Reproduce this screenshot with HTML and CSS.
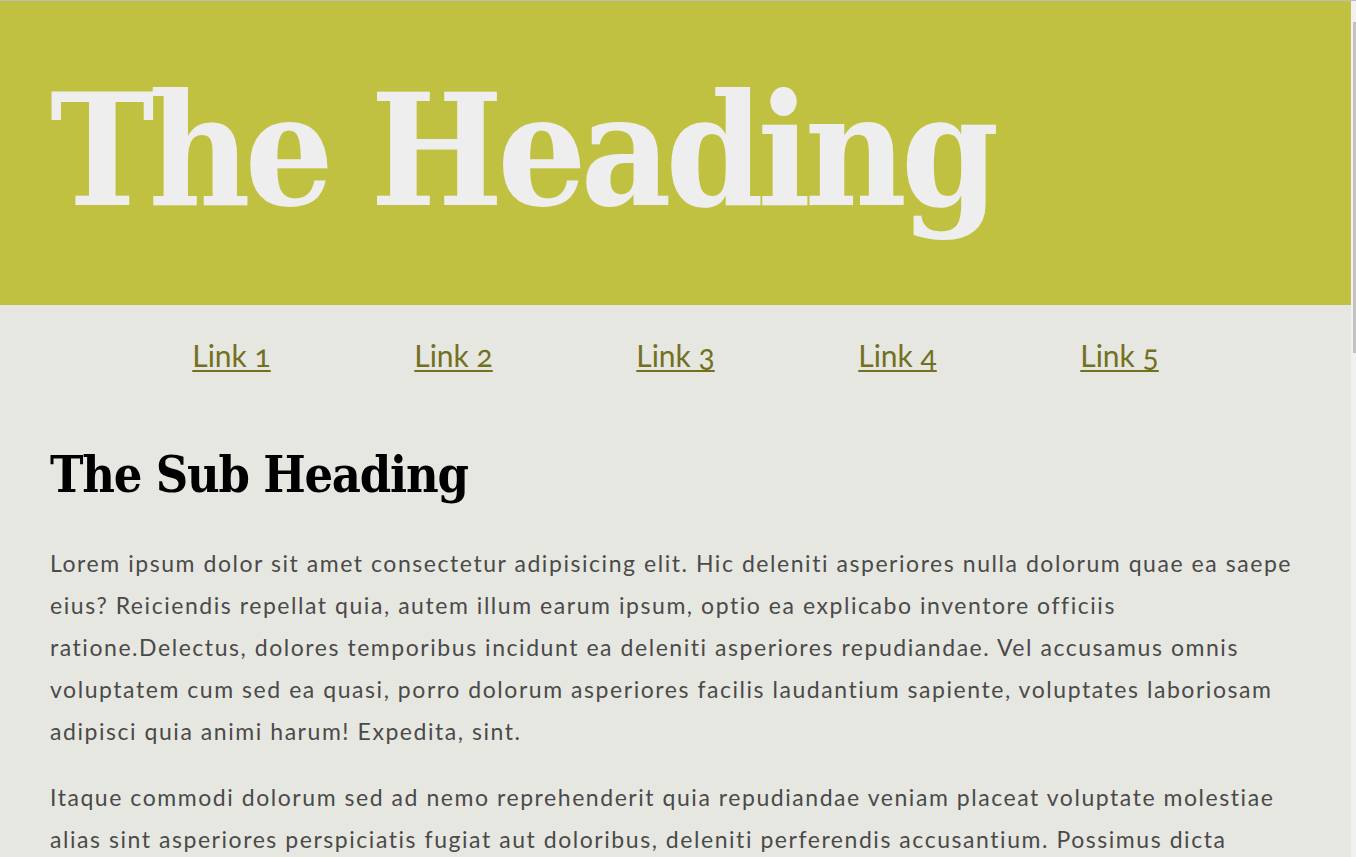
FILE: index.html
```html
<!DOCTYPE html>
<html lang="en">
<head>
<meta charset="utf-8">
<title>The Heading</title>
<link rel="stylesheet" href="styles.css">
</head>
<body>
<div class="page">
  <header class="site-header">
    <h1 class="site-title">The Heading</h1>
  </header>
  <nav class="site-nav">
    <ul class="nav-list">
      <li class="nav-item"><a class="nav-link" href="#">Link 1</a></li>
      <li class="nav-item"><a class="nav-link" href="#">Link 2</a></li>
      <li class="nav-item"><a class="nav-link" href="#">Link 3</a></li>
      <li class="nav-item"><a class="nav-link" href="#">Link 4</a></li>
      <li class="nav-item"><a class="nav-link" href="#">Link 5</a></li>
    </ul>
  </nav>
  <main class="content">
    <h2 class="sub-heading">The Sub Heading</h2>
    <p class="text">Lorem ipsum dolor sit amet consectetur adipisicing elit. Hic deleniti asperiores nulla dolorum quae ea saepe eius? Reiciendis repellat quia, autem illum earum ipsum, optio ea explicabo inventore officiis ratione.Delectus, dolores temporibus incidunt ea deleniti asperiores repudiandae. Vel accusamus omnis voluptatem cum sed ea quasi, porro dolorum asperiores facilis laudantium sapiente, voluptates laboriosam adipisci quia animi harum! Expedita, sint.</p>
    <p class="text">Itaque commodi dolorum sed ad nemo reprehenderit quia repudiandae veniam placeat voluptate molestiae alias sint asperiores perspiciatis fugiat aut doloribus, deleniti perferendis accusantium. Possimus dicta aperiam, quibusdam voluptatibus nisi quos ipsum ullam eos maiores corporis iure perspiciatis sit quasi.</p>
    <p class="text">Lorem ipsum dolor sit amet consectetur adipisicing elit. Hic deleniti asperiores nulla dolorum quae ea saepe eius? Reiciendis repellat quia, autem illum earum ipsum, optio ea explicabo inventore officiis ratione.Delectus, dolores temporibus incidunt ea deleniti asperiores repudiandae. Vel accusamus omnis voluptatem cum sed ea quasi, porro dolorum asperiores facilis laudantium sapiente, voluptates laboriosam adipisci quia animi harum! Expedita, sint.</p>
  </main>
</div>
<div class="scrollbar" aria-hidden="true"><div class="scrollbar-thumb"></div></div>
</body>
</html>
```
FILE: styles.css
```css
html,
body {
  height: 100%;
}
html {
  background: #e7e7e1;
}
body {
  margin: 0;
  box-sizing: border-box;
  display: flex;
  overflow: hidden;
  border-top: 1px solid #bdbdbd;
  background: #e7e7e1;
  color: #4a4a4a;
  font-family: Lato, "Open Sans", sans-serif;
}
.page {
  flex: 1;
  min-width: 0;
  overflow: hidden;
}
.scrollbar {
  flex: 0 0 5px;
  box-sizing: border-box;
  padding-top: 21px;
  background: #f1f1f1;
}
.scrollbar-thumb {
  height: 331px;
  margin-left: 2px;
  background: #c1c1c1;
}
.site-header {
  background: #c0c140;
  padding: 72px 50px 76px;
}
.site-title {
  margin: 0;
  color: #eeeeee;
  font-family: "DejaVu Serif Condensed", "DejaVu Serif", serif;
  font-weight: 700;
  font-size: 156px;
  line-height: 156px;
  letter-spacing: -6px;
}
.site-nav {
  padding: 33px 0 0;
}
.nav-list {
  list-style: none;
  margin: 0;
  padding: 0;
  display: flex;
  justify-content: center;
}
.nav-item {
  width: 222px;
  text-align: center;
}
.nav-link {
  color: #73701f;
  font-size: 30px;
  line-height: 35px;
  font-variant-numeric: oldstyle-nums;
  text-decoration: underline;
  text-decoration-thickness: 2px;
  text-underline-offset: 3px;
}
.content {
  padding: 72px 50px 60px;
}
.sub-heading {
  margin: 0 0 38px;
  color: #000;
  font-family: "DejaVu Serif Condensed", "DejaVu Serif", serif;
  font-weight: 700;
  font-size: 50px;
  line-height: 59px;
  letter-spacing: -1.2px;
}
.text {
  margin: 0 0 24px;
  font-size: 23px;
  line-height: 42px;
  letter-spacing: 1.55px;
}
```
